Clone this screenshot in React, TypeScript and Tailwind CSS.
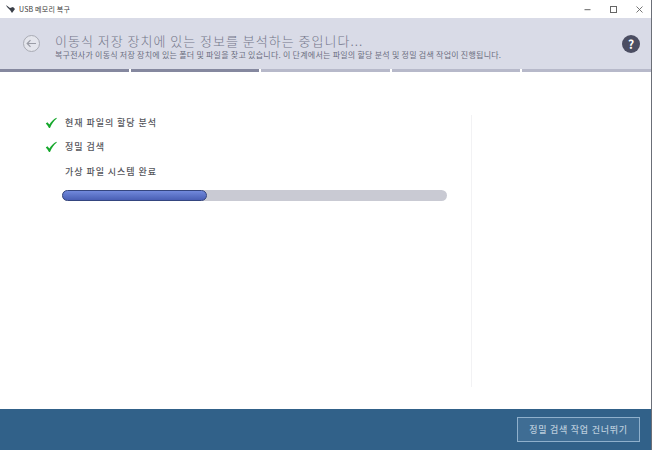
import React from "react";

const font = { fontFamily: '"Noto Sans CJK KR", "Liberation Sans", sans-serif' };

function Check() {
  return (
    <svg width="12" height="12" viewBox="0 0 12 12" className="shrink-0">
      <path d="M0.8 6.6 L2.4 5.2 L4.4 7.6 C6 4.8 8.4 2.4 11.4 0.8 L11.8 1.6 C9 3.8 6.8 7 5 11 L4 11 C3 9.2 2 7.8 0.8 6.6 Z" fill="#16a82c" />
    </svg>
  );
}

function Row({ label, done }: { label: string; done?: boolean }) {
  return (
    <div className="flex items-center h-[12px]">
      <div className="w-[20px] flex items-center">{done && <Check />}</div>
      <span className="text-[9px] leading-[12px] text-[#55565c] font-medium tracking-[0.95px]">{label}</span>
    </div>
  );
}

export default function App() {
  return (
    <div style={font} className="w-[652px] h-[450px] flex flex-col bg-white overflow-hidden border-r border-r-[#6b6f78]">
      <div className="h-[18px] flex items-center justify-between pl-[5px] pr-[8px] shrink-0">
        <div className="flex items-center gap-[3px]">
          <svg width="11" height="10" viewBox="0 0 11 10">
            <path d="M1 1 L5 4 L8 3 L10 5 L7 9 L5 6 L2 3 Z" fill="#3a3f48" />
          </svg>
          <span className="text-[7px] leading-[10px] text-[#3c3c3c] tracking-[0.2px]">USB 메모리 복구</span>
        </div>
        <div className="flex items-center gap-[19px] text-[#555]">
          <svg width="7" height="7" viewBox="0 0 7 7"><path d="M0.5 3.7 H6.5" stroke="#666" strokeWidth="1" /></svg>
          <svg width="7" height="7" viewBox="0 0 7 7"><rect x="0.5" y="0.5" width="6" height="6" fill="none" stroke="#666" strokeWidth="1" /></svg>
          <svg width="7" height="7" viewBox="0 0 7 7"><path d="M0.5 0.5 L6.5 6.5 M6.5 0.5 L0.5 6.5" stroke="#666" strokeWidth="0.9" /></svg>
        </div>
      </div>

      <div className="h-[51px] bg-[#d9dbe7] flex items-center shrink-0 pl-[23px] pr-[11px]">
        <div className="w-[17px] h-[17px] rounded-full border border-[#a9abb4] bg-[#e4e5ec] flex items-center justify-center shrink-0">
          <svg width="11" height="9" viewBox="0 0 11 9">
            <path d="M10 4.5 H1.5 M4.5 1.2 L1.2 4.5 L4.5 7.8" fill="none" stroke="#9a9ca6" strokeWidth="1.2" />
          </svg>
        </div>
        <div className="ml-[15px] flex-1 flex flex-col pt-[5px]">
          <div className="text-[13px] leading-[15px] font-light text-[#74778a] tracking-[1px] whitespace-nowrap">이동식 저장 장치에 있는 정보를 분석하는 중입니다...</div>
          <div className="mt-[2px] text-[8px] leading-[10px] text-[#6b6e80] tracking-[0.24px] whitespace-nowrap">복구전사가 이동식 저장 장치에 있는 폴더 및 파일을 찾고 있습니다. 이 단계에서는 파일의 할당 분석 및 정밀 검색 작업이 진행됩니다.</div>
        </div>
        <div className="w-[18px] h-[18px] rounded-full bg-[#4b4d62] flex items-center justify-center text-white font-bold text-[12px] leading-none shrink-0">?</div>
      </div>

      <div className="h-[3px] flex gap-[2px] shrink-0 bg-white">
        <div className="flex-1 bg-[#85889f]" />
        <div className="flex-1 bg-[#85889f]" />
        <div className="flex-1 bg-[#b7b9ca]" />
        <div className="flex-1 bg-[#b7b9ca]" />
        <div className="flex-1 bg-[#b7b9ca]" />
      </div>

      <div className="flex-1 relative pl-[45px] pt-[45px]">
        <div className="flex flex-col gap-[12px]">
          <Row label="현재 파일의 할당 분석" done />
          <Row label="정밀 검색" done />
          <div className="mt-px">
            <Row label="가상 파일 시스템 완료" />
          </div>
        </div>
        <div className="ml-[17px] mt-[12px] w-[385px] h-[11px] rounded-full bg-[#c9cad3]">
          <div className="h-full w-[145px] rounded-full bg-gradient-to-b from-[#7189dc] to-[#4a5fb5] border border-[#34457f]" />
        </div>
        <div className="absolute left-[471px] top-[43px] h-[272px] w-px bg-[#f2f2f4]" />
      </div>

      <div className="h-[41px] bg-[#316189] flex items-center justify-end pr-[11px] shrink-0">
        <div className="w-[123px] h-[25px] border border-[#8fb0cc] bg-[#3f6d94] flex items-center justify-center text-[9px] text-[#b9cbdb] font-medium tracking-[0.75px] whitespace-nowrap">정밀 검색 작업 건너뛰기</div>
      </div>
    </div>
  );
}
